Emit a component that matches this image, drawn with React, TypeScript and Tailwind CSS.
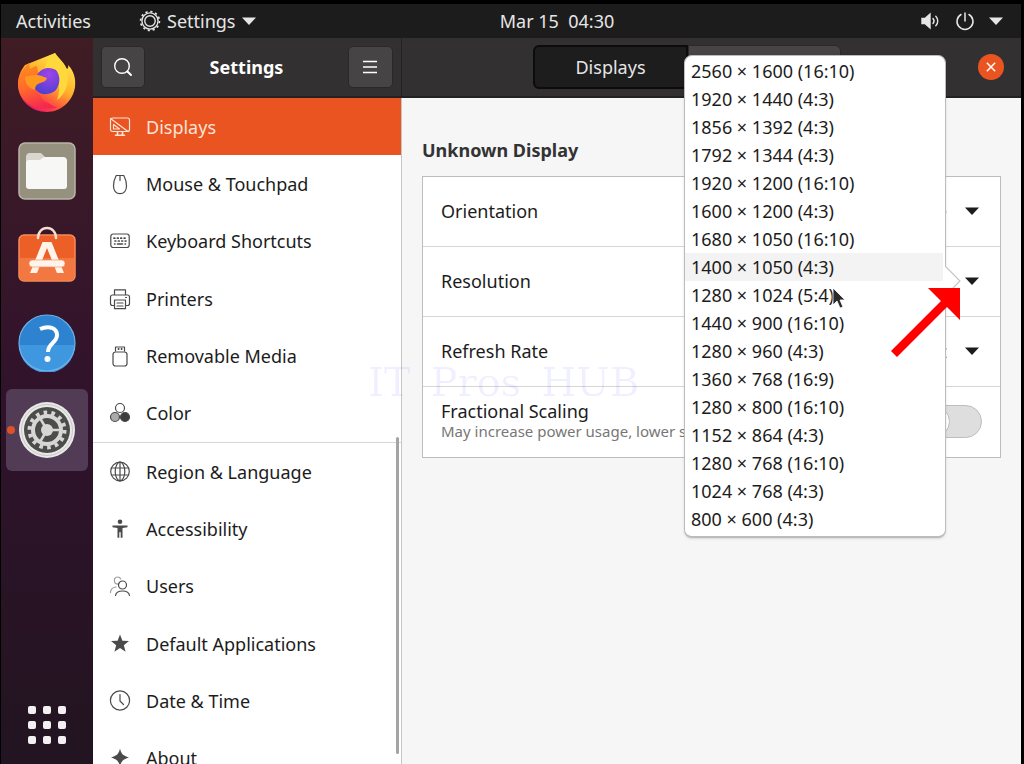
import React from "react";

type IconProps = { children: React.ReactNode; className?: string };

function Icon({ children, className = "size-6" }: IconProps) {
  return (
    <svg
      viewBox="0 0 24 24"
      className={className}
      fill="none"
      stroke="currentColor"
      strokeWidth="1.2"
      strokeLinecap="round"
      strokeLinejoin="round"
      aria-hidden="true"
    >
      {children}
    </svg>
  );
}

const icons: Record<string, React.ReactNode> = {
  displays: (
    <Icon>
      <rect x="2.5" y="3" width="19" height="13.5" rx="2" />
      <path d="M2.5 3.5 20 16.500M5.500 9.500v4.500h6z" />
      <path d="M9.500 17v2.500M14.500 17v2.500M7.500 20.200h9" strokeWidth="1.600" />
    </Icon>
  ),
  mouse: (
    <Icon>
      <path d="M8.200 3.500h7.600c1.600 3 2.700 7 2.700 10.500 0 4.500-2.500 7.700-6.500 7.700S5.500 18.500 5.500 14c0-3.500 1.100-7.500 2.700-10.500zM12 3.500v5" />
    </Icon>
  ),
  keyboard: (
    <Icon>
      <rect x="2.800" y="5" width="18.400" height="13.500" rx="2.500" />
      <path d="M6 9.200h12M7 12h11" strokeWidth="1.700" strokeDasharray="0.800 2.600" />
      <path d="M6.500 15h.5M9.500 15h5M17 15h.5" strokeWidth="1.600" />
    </Icon>
  ),
  printer: (
    <Icon>
      <path d="M6.500 8V2.800h11V8M6 18.500H4.500c-1.200 0-2-.8-2-2V10c0-1.200.8-2 2-2h15c1.200 0 2 .8 2 2v6.500c0 1.200-.8 2-2 2H18" />
      <path d="M6.500 13h11v8.700h-11zM9 16h6M9 19h6M17.500 10.500h1" />
    </Icon>
  ),
  usb: (
    <Icon>
      <rect x="5" y="8" width="14" height="14" rx="2.500" />
      <path d="M7.500 7V3h9v4" />
      <path d="M10.500 5h.200M13.500 5h.200" strokeWidth="1.800" />
    </Icon>
  ),
  color: (
    <Icon>
      <circle cx="12" cy="7" r="4.500" />
      <circle cx="7" cy="16" r="4.500" fill="#aaa" />
      <circle cx="17" cy="16" r="4.500" fill="#3d3d3d" />
    </Icon>
  ),
  globe: (
    <Icon>
      <circle cx="12" cy="11.500" r="9.300" />
      <ellipse cx="12" cy="11.500" rx="4.800" ry="9.300" />
      <path d="M12 2.200v18.600M3.500 8h17M3.500 15h17" />
    </Icon>
  ),
  access: (
    <Icon>
      <circle cx="12" cy="4.800" r="2.300" fill="currentColor" stroke="none" />
      <path
        d="M4.500 8.500h15v1.700l-5 .8v9.800h-1.800v-5.600h-1.400v5.600H9.500V11l-5-.8z"
        fill="currentColor"
        stroke="none"
      />
    </Icon>
  ),
  users: (
    <Icon>
      <g opacity="0.550">
        <path d="M11 9.500c-1.200 1-3.500.5-4.200-1C5.500 5.500 7 3 9.500 3c1.700 0 2.800.8 3.300 2M2.500 18.500c0-3 1.500-5 5.500-5.500" />
      </g>
      <circle cx="14.500" cy="11" r="4" />
      <path d="M7.500 21.500c.5-3 2.500-4.500 7-4.500s6.500 1.500 7 4.500" />
    </Icon>
  ),
  star: (
    <Icon>
      <path
        d="m12 2.500 2.400 6.300 6.600.3-5.200 4.200 1.800 6.500-5.600-3.700-5.600 3.700 1.800-6.500L3 9.100l6.600-.3z"
        fill="currentColor"
        stroke="none"
      />
    </Icon>
  ),
  clock: (
    <Icon>
      <circle cx="12" cy="11.500" r="9.600" />
      <path d="M12 5.500v6.500l3.500 3.500" />
    </Icon>
  ),
  about: (
    <Icon>
      <path
        d="M12 2.500c1.300 5.500 3 7.200 9 9-6 1.800-7.700 3.500-9 9-1.300-5.500-3-7.200-9-9 6-1.800 7.700-3.500 9-9z"
        fill="currentColor"
        stroke="none"
      />
    </Icon>
  ),
};

const deviceItems = [
  ["displays", "Displays"],
  ["mouse", "Mouse & Touchpad"],
  ["keyboard", "Keyboard Shortcuts"],
  ["printer", "Printers"],
  ["usb", "Removable Media"],
  ["color", "Color"],
];

const systemItems = [
  ["globe", "Region & Language"],
  ["access", "Accessibility"],
  ["users", "Users"],
  ["star", "Default Applications"],
  ["clock", "Date & Time"],
  ["about", "About"],
];

const resolutions = [
  "2560 × 1600 (16:10)",
  "1920 × 1440 (4:3)",
  "1856 × 1392 (4:3)",
  "1792 × 1344 (4:3)",
  "1920 × 1200 (16:10)",
  "1600 × 1200 (4:3)",
  "1680 × 1050 (16:10)",
  "1400 × 1050 (4:3)",
  "1280 × 1024 (5:4)",
  "1440 × 900 (16:10)",
  "1280 × 960 (4:3)",
  "1360 × 768 (16:9)",
  "1280 × 800 (16:10)",
  "1152 × 864 (4:3)",
  "1280 × 768 (16:10)",
  "1024 × 768 (4:3)",
  "800 × 600 (4:3)",
];

function Caret() {
  return (
    <svg viewBox="0 0 14 8" className="h-2 w-3.5 shrink-0" fill="currentColor" aria-hidden="true">
      <path d="M0 .5h14L7 8z" />
    </svg>
  );
}

function TopBar() {
  return (
    <header className="grid h-[34px] shrink-0 grid-cols-[1fr_auto_1fr] items-center bg-[#1c1c1c] text-[#e6e6e6]">
      <div className="flex items-center">
        <button className="ml-[15px]">Activities</button>
        <button className="ml-12 flex items-center gap-1.5">
          <svg viewBox="0 0 24 24" className="size-[22px]" fill="none" stroke="currentColor" aria-hidden="true">
            <circle cx="12" cy="12" r="8.800" strokeWidth="1.500" />
            <circle cx="12" cy="12" r="5.700" strokeWidth="1.500" />
            <circle cx="12" cy="12" r="10.300" strokeWidth="1.800" strokeDasharray="2.400 2.993" />
          </svg>
          Settings
          <Caret />
        </button>
      </div>
      <button className="whitespace-pre pl-[92px]">Mar 15  04:30</button>
      <div className="flex items-center justify-end pr-[18px]">
        <button aria-label="System menu" className="flex items-center gap-3.5">
          <svg viewBox="0 0 20 18" className="h-[18px] w-5" fill="none" stroke="currentColor" strokeWidth="1.400" strokeLinecap="round" aria-hidden="true">
            <path d="M1 6.500h3L9 2v14l-5-4.500H1z" fill="currentColor" />
            <path d="M12 6.500c1.300 1.500 1.300 3.500 0 5M14.800 4.200c2.600 2.600 2.600 7 0 9.600" />
          </svg>
          <svg viewBox="0 0 20 20" className="size-5" fill="none" stroke="currentColor" strokeWidth="1.500" strokeLinecap="round" aria-hidden="true">
            <path d="M10 2v8M6 3.500a8 8 0 1 0 8 0" />
          </svg>
          <Caret />
        </button>
      </div>
    </header>
  );
}

function FirefoxIcon() {
  return (
    <svg viewBox="0 0 60 62" className="h-[62px] w-[60px]" aria-hidden="true">
      <defs>
        <linearGradient id="fx-body" x1="0.850" y1="0.100" x2="0.300" y2="1">
          <stop offset="0" stopColor="#ffe84a" />
          <stop offset="0.450" stopColor="#ffb02c" />
          <stop offset="0.720" stopColor="#ff5a3a" />
          <stop offset="1" stopColor="#ee1767" />
        </linearGradient>
        <linearGradient id="fx-ear" x1="0.200" y1="0" x2="0.500" y2="1">
          <stop offset="0" stopColor="#ff8f1c" />
          <stop offset="0.500" stopColor="#ff6a2c" />
          <stop offset="1" stopColor="#f5284f" />
        </linearGradient>
        <radialGradient id="fx-core" cx="0.600" cy="0.250" r="0.800">
          <stop offset="0" stopColor="#a044e8" />
          <stop offset="1" stopColor="#4b3fd0" />
        </radialGradient>
      </defs>
      <path d="M38 2c3 5 8 8 12 16 2-1 1-3 1-4 6 6 8 14 7 22-2 14-14 25-28 25C14 61 1 49 1 33c0-8 3-14 7-19z" fill="url(#fx-body)" />
      <path d="M1 33c0-8 5-15 11-21l1 6c3-2 5-3 7-3l1 6 9 6-10 13 6 9 14 8C17 61 1 50 1 33z" fill="url(#fx-ear)" />
      <path d="M28 19c0-7 4-13 10-17 3 5 8 8 11 15 5 12 0 26-9 32 5-12 2-24-12-30z" fill="#ffd83c" />
      <path d="M20 24c4-7 12-9 19-5 4 5 5 13 0 20-5 5-15 6-20 0-4-4-3-10 1-15z" fill="url(#fx-core)" />
      <path d="M8 26c6-2 13-3 19 0l3 1c-1 4-5 4-9 6-2 1-3 3-3 6C11 37 8 32 8 26z" fill="#ff981f" />
    </svg>
  );
}

function FilesIcon() {
  return (
    <svg viewBox="0 0 58 58" className="size-[58px]" aria-hidden="true">
      <rect x="1" y="1" width="56" height="56" rx="6" fill="#96917f" stroke="#b8b5aa" strokeWidth="1.500" />
      <path d="M8 15c0-2 1-4 4-4h11l4 4v8H8z" fill="#d8d6cf" />
      <path d="M8 21c0-2 1-3 3-3h10c3 0 3-3 6-3h18c3 0 4 2 4 4v25c0 2-1 3-3 3H11c-2 0-3-1-3-3z" fill="#f7f7f5" />
    </svg>
  );
}

function SoftwareIcon() {
  return (
    <svg viewBox="0 0 58 56" className="h-14 w-[58px]" aria-hidden="true">
      <rect x="1" y="9" width="56" height="46" rx="5" fill="#ec5f26" stroke="#f78b58" strokeWidth="1.500" />
      <path d="M2 32h54v18c0 3-1 4-4 4H6c-3 0-4-1-4-4z" fill="#f37740" />
      <path d="M20 12C20 6 24 2 29 2s9 4 9 10" fill="none" stroke="#f5ddd0" strokeWidth="2.500" strokeLinecap="round" />
      <path d="M12 47 24.500 16h9L46 47h-7L29 22 19 47z" fill="#fff3ea" />
      <rect x="11" y="34" width="36" height="7" rx="3.500" fill="#fff3ea" stroke="#e98a60" strokeWidth="0.600" />
    </svg>
  );
}

function HelpIcon() {
  return (
    <svg viewBox="0 0 58 58" className="size-[58px]" aria-hidden="true">
      <circle cx="29" cy="29" r="28" fill="#2d83d0" />
      <path d="M1 31a28 28 0 0 0 56 0z" fill="#3f97df" />
      <circle cx="29" cy="29" r="28" fill="none" stroke="#6fb2e8" strokeWidth="1.200" />
      <path d="M22 15c9-4 17-1 17 6 0 8-9 8-9 17" fill="none" stroke="#fff" strokeWidth="4" />
      <circle cx="29.500" cy="45" r="3" fill="#fff" />
    </svg>
  );
}

function GearIcon() {
  return (
    <svg viewBox="0 0 58 58" className="size-[58px]" aria-hidden="true">
      <circle cx="29" cy="29" r="28" fill="#e9e9e7" />
      <circle cx="29" cy="29" r="25.500" fill="none" stroke="#c7c7c5" strokeWidth="1" />
      <circle cx="29" cy="29" r="23" fill="#4c4c4a" />
      <circle cx="29" cy="29" r="17.500" fill="none" stroke="#d6d6d4" strokeWidth="4" strokeDasharray="3.600 4.250" />
      <circle cx="29" cy="29" r="14" fill="none" stroke="#d6d6d4" strokeWidth="4" />
      <path d="M29 29h13M29 29l-7-12M29 29l-7 12" stroke="#d6d6d4" strokeWidth="2.500" />
      <circle cx="29" cy="29" r="6" fill="#d6d6d4" />
    </svg>
  );
}

function Dock() {
  return (
    <nav
      aria-label="Dock"
      className="flex w-[92px] shrink-0 flex-col items-center bg-linear-to-b from-[#401c24] via-[#30122c] to-[#221420] pb-5 pt-[13px]"
    >
      <button aria-label="Firefox">
        <FirefoxIcon />
      </button>
      <button aria-label="Files" className="mt-[29px]">
        <FilesIcon />
      </button>
      <button aria-label="Ubuntu Software" className="mt-[26px]">
        <SoftwareIcon />
      </button>
      <button aria-label="Help" className="mt-8">
        <HelpIcon />
      </button>
      <button
        aria-label="Settings"
        className="relative mt-[17px] flex size-[82px] items-center justify-center rounded-md bg-[#523b54]"
      >
        <span className="absolute left-px size-2 rounded-full bg-[#dd5228]" />
        <GearIcon />
      </button>
      <button aria-label="Show Applications" className="mt-auto grid grid-cols-3 gap-[7px]">
        {Array.from({ length: 9 }, (_, i) => (
          <span key={i} className="size-2 rounded-[2px] bg-[#f2f0f2]" />
        ))}
      </button>
    </nav>
  );
}

function NavGroup({ items }: { items: string[][] }) {
  return (
    <ul className="grid h-[344px] shrink-0 auto-rows-fr">
      {items.map(([icon, label]) => (
        <li key={label} className="grid">
          <a
            href="#"
            aria-current={icon === "displays" ? "page" : undefined}
            className={
              icon === "displays"
                ? "flex items-center gap-3.5 bg-[#e95420] pl-[15px] text-[#fbe3d8]"
                : "flex items-center gap-3.5 pl-[15px] text-[#1c1c1c]"
            }
          >
            <span className={icon === "displays" ? "" : "text-[#4a4a4a]"}>{icons[icon]}</span>
            {label}
          </a>
        </li>
      ))}
    </ul>
  );
}

function Sidebar() {
  return (
    <aside className="flex w-[309px] shrink-0 flex-col bg-white">
      <div className="flex h-[60px] shrink-0 items-center justify-between border-b-2 border-r border-[#232122] bg-[#333031] px-2 text-white">
        <button
          aria-label="Search"
          className="flex h-[42px] w-11 items-center justify-center rounded-[5px] border border-[#2a2829] bg-[#474445]"
        >
          <svg viewBox="0 0 20 20" className="size-5" fill="none" stroke="currentColor" strokeWidth="1.400" strokeLinecap="round" aria-hidden="true">
            <circle cx="9" cy="9" r="7.300" />
            <path d="m14.500 14.500 3.500 3.500" strokeWidth="2" />
          </svg>
        </button>
        <h1 className="font-bold">Settings</h1>
        <button
          aria-label="Menu"
          className="flex h-[42px] w-[45px] items-center justify-center rounded-[5px] border border-[#2a2829] bg-[#474445]"
        >
          <svg viewBox="0 0 14 14" className="size-3.5" stroke="currentColor" strokeWidth="1.500" aria-hidden="true">
            <path d="M0 1.500h14M0 7h14M0 12.500h14" />
          </svg>
        </button>
      </div>
      <nav
        aria-label="Settings panels"
        className="relative flex min-h-0 grow flex-col overflow-hidden border-r border-[#c6c6c6]"
      >
        <NavGroup items={deviceItems} />
        <hr className="border-[#d6d6d6]" />
        <NavGroup items={systemItems} />
        <span className="absolute bottom-2.5 right-0.5 top-[339px] w-[3px] rounded-full bg-[#a4a4a4]" />
      </nav>
    </aside>
  );
}

function ResolutionMenu() {
  return (
    <div className="absolute -top-48 right-[54px] z-10 w-[262px] rounded-lg border border-b-2 border-[#bcbcbc] bg-white pb-[3px] pt-px shadow-sm">
      <ul role="listbox" aria-label="Resolution">
        {resolutions.map((r) => (
          <li
            key={r}
            role="option"
            aria-selected={r === "1400 × 1050 (4:3)"}
            className={
              r === "1400 × 1050 (4:3)"
                ? "mr-0.5 flex h-7 items-center bg-[#f3f3f3] pl-1.5"
                : "flex h-7 items-center pl-1.5"
            }
          >
            {r}
          </li>
        ))}
      </ul>
      <svg viewBox="0 0 16 32" className="absolute -right-4 top-[209px] h-8 w-4" aria-hidden="true">
        <path d="M0 1v30L15 16z" fill="#fff" />
        <path d="M0 1 15 16 0 31" fill="none" stroke="#c4c4c4" strokeWidth="1.200" />
      </svg>
    </div>
  );
}

function Content() {
  return (
    <main className="flex min-w-0 grow flex-col bg-[#f6f6f6]">
      <div className="flex h-[60px] shrink-0 items-center border-b-2 border-[#232122] bg-[#333031] pl-[131px] pr-[17px] text-[#e6e6e6]">
        <div className="flex h-11 w-[308px]">
          <button className="grow basis-0 rounded-l-md border-2 border-[#0c0c0c] bg-[#1d1d1d]">Displays</button>
          <button aria-label="Night Light" className="grow basis-0 rounded-r-md border border-[#2a2829] bg-[#474445]" />
        </div>
        <button aria-label="Close" className="ml-auto flex size-[26px] items-center justify-center rounded-full bg-[#e95420]">
          <svg viewBox="0 0 12 12" className="size-2.5" stroke="#fff" strokeWidth="1.800" aria-hidden="true">
            <path d="m1 1 10 10M11 1 1 11" />
          </svg>
        </button>
      </div>
      <section className="px-5 pt-10">
        <h2 className="h-6 font-bold leading-6 text-[#333]">Unknown Display</h2>
        <div className="mt-3.5 divide-y divide-[#d6d6d6] border border-[#bdbdbd] bg-white text-[#1c1c1c]">
          <div className="flex h-[70px] items-center justify-between pb-0.5 pl-[18px] pr-[21px]">
            <span id="orientation">Orientation</span>
            <button aria-labelledby="orientation" className="flex items-center gap-[18px]">
              Landscape
              <Caret />
            </button>
          </div>
          <div className="relative flex h-[70px] items-center justify-between pb-0.5 pl-[18px] pr-[21px]">
            <span id="resolution">Resolution</span>
            <button aria-labelledby="resolution" aria-haspopup="listbox" aria-expanded="true">
              <Caret />
            </button>
            <ResolutionMenu />
          </div>
          <div className="flex h-[70px] items-center justify-between pb-0.5 pl-[18px] pr-[21px]">
            <span id="refresh">Refresh Rate</span>
            <button aria-labelledby="refresh" className="flex items-center gap-[18px]">
              60.00 Hz
              <Caret />
            </button>
          </div>
          <div className="flex h-[70px] items-center justify-between pb-0.5 pl-[18px] pr-[18px]">
            <label htmlFor="scaling" className="min-w-0">
              <span className="block leading-5">Fractional Scaling</span>
              <span className="block max-w-[300px] overflow-hidden whitespace-nowrap text-[15px] leading-5 text-[#777]">
                May increase power usage, lower speed
              </span>
            </label>
            <input
              id="scaling"
              type="checkbox"
              role="switch"
              className="h-[33px] w-16 appearance-none rounded-full border border-[#bdbdbd] bg-[#dedede] before:block before:size-[31px] before:rounded-full before:border before:border-[#bdbdbd] before:bg-white"
            />
          </div>
        </div>
      </section>
    </main>
  );
}

function Overlays() {
  return (
    <>
      <div className="pointer-events-none absolute left-[368px] top-[360px] z-0 flex gap-5 font-['DejaVu_Serif',serif] text-[40px] leading-[44px] text-[#0000ff10]">
        <span>IT</span>
        <span>Pros</span>
        <span>HUB</span>
      </div>
      <svg viewBox="0 0 70 70" className="pointer-events-none absolute left-[891px] top-[288px] z-20 size-[70px]" aria-hidden="true">
        <path d="M0 63 50 13 37 0h32v32L56 19 6 69z" fill="#fe0000" />
      </svg>
      <svg viewBox="0 0 14 24" className="pointer-events-none absolute left-[832px] top-[287px] z-20 h-6 w-3.5" aria-hidden="true">
        <path d="M1 1v17l4-4 3 7 3-1-3-7h5z" fill="#2b2b2b" stroke="#fff" strokeWidth="0.800" />
      </svg>
    </>
  );
}

export default function App() {
  return (
    <div className="relative flex h-screen flex-col overflow-hidden bg-black pl-px pr-[3px] pt-1 font-['Noto_Sans',sans-serif] text-[18px] leading-6">
      <TopBar />
      <div className="flex min-h-0 grow">
        <Dock />
        <Sidebar />
        <Content />
      </div>
      <Overlays />
    </div>
  );
}
